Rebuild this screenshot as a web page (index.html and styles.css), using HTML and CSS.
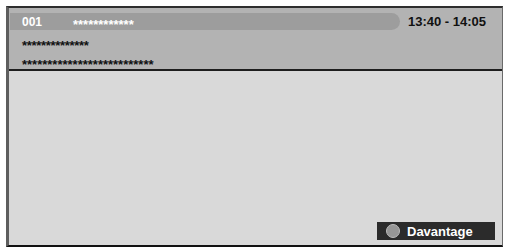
FILE: index.html
```html
<!DOCTYPE html>
<html lang="fr">
<head>
<meta charset="utf-8">
<title>Guide</title>
<link rel="stylesheet" href="styles.css">
</head>
<body>
<div class="frame">
  <div class="header">
    <div class="title-row">
      <div class="title-bar">
        <span class="ch">001</span>
        <span class="prog">************</span>
      </div>
      <span class="time">13:40 - 14:05</span>
    </div>
    <div class="line line-a">**************</div>
    <div class="line line-b">**************************</div>
  </div>
  <div class="body">
    <div class="more">
      <span class="dot"></span>
      <span class="more-label">Davantage</span>
    </div>
  </div>
</div>
</body>
</html>
```
FILE: styles.css
```css
html, body {
  margin: 0;
  padding: 0;
  background: #ffffff;
}
body {
  font-family: "Liberation Sans", Arial, sans-serif;
  font-weight: bold;
}
.frame {
  margin: 6px 3px 0 6px;
  height: 241px;
  box-sizing: border-box;
  border-top: 2px solid #2e2e2e;
  border-left: 3px solid #5e5e5e;
  border-right: 1px solid #6a6a6a;
  border-bottom: 2px solid #111111;
  display: flex;
  flex-direction: column;
}
.header {
  background: #b3b3b3;
  height: 63px;
  box-sizing: border-box;
  border-bottom: 2px solid #1e1e1e;
  padding: 5px 0 0 1px;
}
.title-row {
  display: flex;
  align-items: center;
  height: 17px;
}
.title-bar {
  width: 390px;
  height: 17px;
  background: #9d9d9d;
  border-radius: 0 9px 9px 0;
  display: flex;
  align-items: center;
  color: #ffffff;
}
.ch {
  font-size: 12px;
  margin-left: 12px;
  width: 51px;
}
.prog {
  font-size: 13px;
  position: relative;
  top: 3px;
}
.time {
  font-size: 13px;
  color: #111111;
  margin-left: 8px;
}
.line {
  font-size: 13px;
  color: #111111;
  margin-left: 12px;
  height: 19px;
  line-height: 19px;
}
.line-a {
  margin-top: 6px;
  letter-spacing: -0.3px;
}
.body {
  flex: 1;
  background: #d9d9d9;
  display: flex;
  align-items: flex-end;
  justify-content: flex-end;
  padding: 0 7px 5px 0;
}
.more {
  width: 118px;
  height: 18px;
  background: #2b2b2b;
  display: flex;
  align-items: center;
  box-sizing: border-box;
  padding-left: 9px;
}
.dot {
  width: 14px;
  height: 14px;
  box-sizing: border-box;
  border-radius: 50%;
  background: #969696;
  border: 1px solid #bcbcbc;
}
.more-label {
  color: #ffffff;
  font-size: 13px;
  margin-left: 7px;
}
```
